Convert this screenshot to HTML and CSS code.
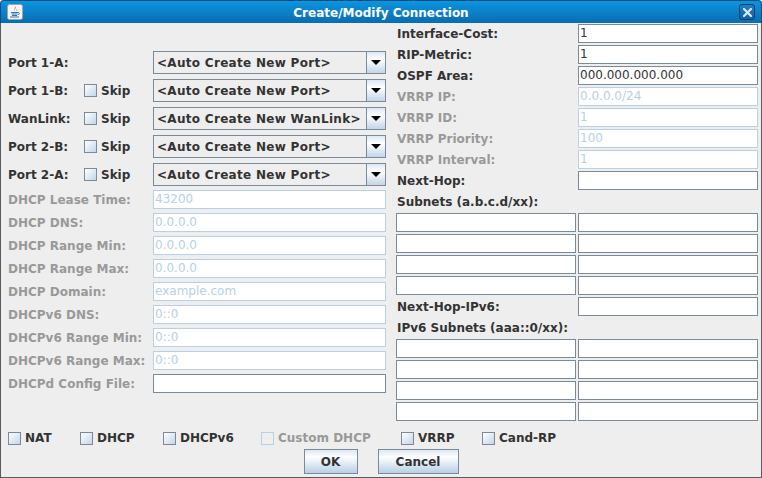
FILE: index.html
```html
<!DOCTYPE html>
<html lang="en">
<head>
  <meta charset="UTF-8" />
  <meta name="viewport" content="width=device-width, initial-scale=1" />
  <title>Create/Modify Connection</title>
  <link rel="stylesheet" href="styles.css">
</head>
<body>
  <div class="window">
    <div class="titlebar">
      <span class="app-icon">
        <svg width="16" height="16" viewBox="0 0 16 16">
          <rect x="0.5" y="0.5" width="15" height="15" rx="2" fill="#f4f6f8" stroke="#9aa7b3"/>
          <path d="M8.5 2.5 C10 4 7 5 8 7 C6.5 6 7.5 4.5 8.5 2.5 Z" fill="#e8731c"/>
          <path d="M9.5 5 C10.5 6 9 6.5 9.5 7.5 C8.8 7 9 6 9.5 5 Z" fill="#e8731c"/>
          <path d="M4 8.5 H11 M4.5 10 H10.5 M5 11.5 H10" stroke="#3a73b8" stroke-width="1"/>
          <path d="M11 8.5 C13 8.5 13 10.5 10.8 10.5" fill="none" stroke="#3a73b8" stroke-width="1"/>
          <path d="M3 13 H12" stroke="#3a73b8" stroke-width="1"/>
        </svg>
      </span>
      <span class="title">Create/Modify Connection</span>
      <span class="close-btn">
        <svg width="9" height="9" viewBox="0 0 9 9">
          <path d="M1 1 L8 8 M8 1 L1 8" stroke="#dce8f3" stroke-width="2.2" stroke-linecap="square"/>
        </svg>
      </span>
    </div>

    <div class="panel">
      <div class="columns">
        <!-- ports and dhcp settings -->
        <div class="left-col">
          <div class="row port-row">
            <div class="label-cell"><span class="lbl">Port 1-A:</span></div>
            <div class="combo"><span class="combo-text">&lt;Auto Create New Port&gt;</span><span class="combo-arrow"></span></div>
          </div>
          <div class="row port-row">
            <div class="label-cell"><span class="lbl">Port 1-B:</span><span class="check"></span><span class="check-text">Skip</span></div>
            <div class="combo"><span class="combo-text">&lt;Auto Create New Port&gt;</span><span class="combo-arrow"></span></div>
          </div>
          <div class="row port-row">
            <div class="label-cell"><span class="lbl">WanLink:</span><span class="check"></span><span class="check-text">Skip</span></div>
            <div class="combo"><span class="combo-text">&lt;Auto Create New WanLink&gt;</span><span class="combo-arrow"></span></div>
          </div>
          <div class="row port-row">
            <div class="label-cell"><span class="lbl">Port 2-B:</span><span class="check"></span><span class="check-text">Skip</span></div>
            <div class="combo"><span class="combo-text">&lt;Auto Create New Port&gt;</span><span class="combo-arrow"></span></div>
          </div>
          <div class="row port-row last">
            <div class="label-cell"><span class="lbl">Port 2-A:</span><span class="check"></span><span class="check-text">Skip</span></div>
            <div class="combo"><span class="combo-text">&lt;Auto Create New Port&gt;</span><span class="combo-arrow"></span></div>
          </div>

          <div class="row field-row">
            <div class="label-cell disabled">DHCP Lease Time:</div>
            <div class="field disabled">43200</div>
          </div>
          <div class="row field-row">
            <div class="label-cell disabled">DHCP DNS:</div>
            <div class="field disabled">0.0.0.0</div>
          </div>
          <div class="row field-row">
            <div class="label-cell disabled">DHCP Range Min:</div>
            <div class="field disabled">0.0.0.0</div>
          </div>
          <div class="row field-row">
            <div class="label-cell disabled">DHCP Range Max:</div>
            <div class="field disabled">0.0.0.0</div>
          </div>
          <div class="row field-row">
            <div class="label-cell disabled">DHCP Domain:</div>
            <div class="field disabled">example.com</div>
          </div>
          <div class="row field-row">
            <div class="label-cell disabled">DHCPv6 DNS:</div>
            <div class="field disabled">0::0</div>
          </div>
          <div class="row field-row">
            <div class="label-cell disabled">DHCPv6 Range Min:</div>
            <div class="field disabled">0::0</div>
          </div>
          <div class="row field-row">
            <div class="label-cell disabled">DHCPv6 Range Max:</div>
            <div class="field disabled">0::0</div>
          </div>
          <div class="row field-row">
            <div class="label-cell disabled">DHCPd Config File:</div>
            <div class="field"></div>
          </div>
        </div>

        <!-- routing settings -->
        <div class="right-col">
          <div class="lbl">Interface-Cost:</div>
          <div class="field">1</div>
          <div class="lbl">RIP-Metric:</div>
          <div class="field">1</div>
          <div class="lbl">OSPF Area:</div>
          <div class="field">000.000.000.000</div>
          <div class="lbl disabled">VRRP IP:</div>
          <div class="field disabled">0.0.0.0/24</div>
          <div class="lbl disabled">VRRP ID:</div>
          <div class="field disabled">1</div>
          <div class="lbl disabled">VRRP Priority:</div>
          <div class="field disabled">100</div>
          <div class="lbl disabled">VRRP Interval:</div>
          <div class="field disabled">1</div>
          <div class="lbl">Next-Hop:</div>
          <div class="field"></div>
          <div class="lbl wide">Subnets (a.b.c.d/xx):</div>
          <div class="field"></div><div class="field"></div>
          <div class="field"></div><div class="field"></div>
          <div class="field"></div><div class="field"></div>
          <div class="field"></div><div class="field"></div>
          <div class="lbl">Next-Hop-IPv6:</div>
          <div class="field"></div>
          <div class="lbl wide">IPv6 Subnets (aaa::0/xx):</div>
          <div class="field"></div><div class="field"></div>
          <div class="field"></div><div class="field"></div>
          <div class="field"></div><div class="field"></div>
          <div class="field"></div><div class="field"></div>
        </div>
      </div>

      <div class="options">
        <div class="opt"><span class="check"></span><span class="check-text">NAT</span></div>
        <div class="opt"><span class="check"></span><span class="check-text">DHCP</span></div>
        <div class="opt"><span class="check"></span><span class="check-text">DHCPv6</span></div>
        <div class="opt disabled"><span class="check"></span><span class="check-text">Custom DHCP</span></div>
        <div class="opt"><span class="check"></span><span class="check-text">VRRP</span></div>
        <div class="opt"><span class="check"></span><span class="check-text">Cand-RP</span></div>
      </div>

      <div class="buttons">
        <button class="btn btn-ok">OK</button>
        <button class="btn btn-cancel">Cancel</button>
      </div>
    </div>
  </div>
</body>
</html>
```

FILE: styles.css
```css
html, body {
  margin: 0;
  padding: 0;
}

body {
  font-family: 'DejaVu Sans', 'Liberation Sans', sans-serif;
  font-size: 12px;
  color: #333333;
  background-color: #eeeeee;
}

.window {
  width: 762px;
  height: 478px;
  display: flex;
  flex-direction: column;
}

/* title bar */
.titlebar {
  height: 23px;
  flex: none;
  display: flex;
  align-items: center;
  padding: 0 6px;
  box-sizing: border-box;
  background: linear-gradient(#0a95e0, #0b6cb0);
  border: 1px solid #0d4d7e;
  border-bottom: none;
  border-radius: 4px 4px 0 0;
}

.app-icon {
  width: 16px;
  height: 16px;
  display: flex;
}

.title {
  flex: 1;
  padding-top: 2px;
  text-align: center;
  color: #ffffff;
  font-weight: bold;
}

.close-btn {
  width: 16px;
  height: 16px;
  box-sizing: border-box;
  display: flex;
  align-items: center;
  justify-content: center;
  border: 1px solid #0a3e68;
  border-radius: 3px;
  background: linear-gradient(#1c80c4, #0f64a4);
}

/* dialog body */
.panel {
  flex: 1;
  display: flex;
  flex-direction: column;
  border: 1px solid #5a5a5a;
  border-top: none;
  padding: 1px 3px 3px 7px;
}

.columns {
  height: 398px;
  display: flex;
  gap: 10px;
}

.left-col {
  width: 378px;
  padding-top: 27px;
  display: flex;
  flex-direction: column;
}

.row {
  display: flex;
  align-items: center;
}

.port-row {
  height: 23px;
  margin-bottom: 5px;
}

.port-row.last {
  margin-bottom: 4px;
}

.field-row {
  height: 19px;
  margin-bottom: 4px;
}

.label-cell {
  width: 145px;
  display: flex;
  align-items: center;
  font-weight: bold;
}

.label-cell .lbl {
  width: 76px;
}

.disabled,
.label-cell.disabled {
  color: #999999;
}

.check {
  width: 13px;
  height: 13px;
  box-sizing: border-box;
  border: 1px solid #7a8a99;
  background: linear-gradient(135deg, #ffffff, #c4d5e8);
  flex: none;
}

.check-text {
  margin-left: 4px;
  font-weight: bold;
}

/* combo boxes */
.combo {
  width: 233px;
  height: 23px;
  box-sizing: border-box;
  border: 1px solid #7a8a99;
  background: #eeeeee;
  display: flex;
  align-items: center;
}

.combo-text {
  flex: 1;
  padding-left: 3px;
  font-weight: bold;
  letter-spacing: 0.3px;
  white-space: nowrap;
  overflow: hidden;
}

.combo-arrow {
  width: 19px;
  height: 100%;
  box-sizing: border-box;
  border-left: 1px solid #7a8a99;
  background: linear-gradient(#dde8f3, #ffffff 35%, #c3d5e8);
  display: flex;
  align-items: center;
  justify-content: center;
}

.combo-arrow::after {
  content: '';
  border-left: 5px solid transparent;
  border-right: 5px solid transparent;
  border-top: 5px solid #000000;
}

/* text fields */
.field {
  width: 233px;
  height: 19px;
  box-sizing: border-box;
  border: 1px solid #7a8a99;
  background: #ffffff;
  padding-left: 1px;
  line-height: 17px;
  color: #333333;
  white-space: nowrap;
}

.field.disabled {
  border-color: #b8cfe5;
  color: #b8cfe5;
}

.right-col {
  width: 362px;
  display: grid;
  grid-template-columns: 180px 180px;
  grid-auto-rows: 19px;
  gap: 2px;
}

.right-col .lbl {
  grid-column: 1;
  align-self: center;
  padding-left: 1px;
  font-weight: bold;
  white-space: nowrap;
}

.right-col .lbl.wide {
  grid-column: 1 / span 2;
}

.right-col .field {
  width: 180px;
}

/* bottom check boxes */
.options {
  margin-top: 7px;
  height: 18px;
  display: grid;
  grid-template-columns: 72px 83px 98px 140px 81px auto;
  align-items: center;
}

.opt {
  display: flex;
  align-items: center;
}

.opt.disabled .check {
  border-color: #b8cfe5;
  background: #eeeeee;
}

.buttons {
  margin: 2px -3px 0 -7px;
  display: flex;
  justify-content: center;
  gap: 20px;
}

.btn {
  height: 25px;
  box-sizing: border-box;
  border: 1px solid #7a8a99;
  background: linear-gradient(#dde8f3, #ffffff 30%, #b8cfe5);
  font-family: inherit;
  font-size: 12px;
  font-weight: bold;
  color: #333333;
  padding: 0;
}

.btn-ok {
  width: 54px;
}

.btn-cancel {
  width: 81px;
}
```
